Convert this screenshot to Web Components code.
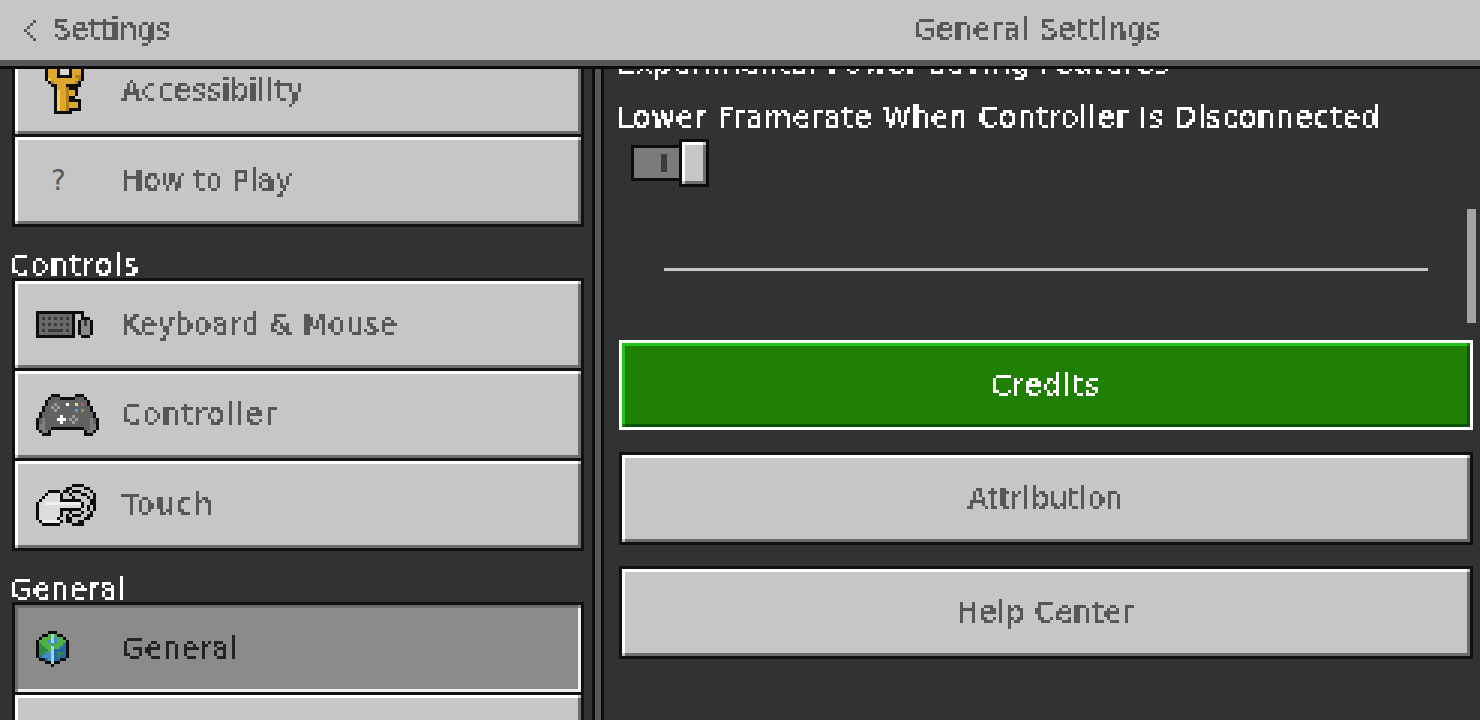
<!DOCTYPE html>
<html>
<head>
<meta charset="utf-8">
<title>General Settings</title>
<style>
  html, body { margin: 0; height: 100%; background: #313233; overflow: hidden; }
</style>
</head>
<body>
<settings-app></settings-app>

<script>
  // mosaic filter: samples text on a 3px grid so it reads like the bitmap font
  const PIXEL_FILTER = `
    <svg width="0" height="0" style="position:absolute">
      <filter id="px" x="-6" y="-6" width="1200" height="60" filterUnits="userSpaceOnUse" color-interpolation-filters="sRGB">
        <feFlood x="1" y="2" width="1" height="1"/>
        <feComposite width="3" height="3"/>
        <feTile result="grid"/>
        <feComposite in="SourceGraphic" in2="grid" operator="in"/>
        <feMorphology operator="dilate" radius="1"/>
        <feComponentTransfer><feFuncA type="discrete" tableValues="0 0 1 1 1"/></feComponentTransfer>
      </filter>
    </svg>`

  class McText extends HTMLElement {
    constructor() {
      super()
      this.attachShadow({ mode: 'open' })
      this.shadowRoot.innerHTML = `
        <style>
          :host { display: inline-block; font: 28px/30px "DejaVu Sans", sans-serif; white-space: nowrap; }
          span { display: inline-block; filter: url(#px); padding: 0 1px; -webkit-text-stroke: 0.4px currentColor; }
          :host([plain]) span { filter: none; -webkit-text-stroke: 0; }
        </style>
        ${PIXEL_FILTER}
        <span><slot></slot></span>`
    }

    // the bitmap font has its own widths, so stretch to the width it took
    connectedCallback() {
      const target = Number(this.getAttribute('w'))
      if (!target) return
      const span = this.shadowRoot.querySelector('span')
      const text = this.textContent
      const width = span.getBoundingClientRect().width - 2
      span.style.letterSpacing = ((target - width) / Math.max(text.length - 1, 1)) + 'px'
    }
  }

  const PALETTES = {
    key: { k: '#0d0d0d', g: '#dca72c', d: '#b07f1c', l: '#f2cf5e', w: '#d8d8d0' },
    kbd: { k: '#0d0d0d', m: '#6a6a6a', x: '#3a3a3a', g: '#8a8a86' },
    pad: { k: '#0d0d0d', m: '#626262', l: '#7d7d7d', s: '#9c9c9c', w: '#ffffff', y: '#e6dc84', r: '#c8566a', b: '#4f9fd8', n: '#6fa55a' },
    touch: { k: '#0d0d0d', w: '#dcdcdc', h: '#f0f0f0' },
    globe: { k: '#0d0d0d', G: '#4fb043', g: '#2f8a45', B: '#2468ac', b: '#3f8fd0', L: '#a7d3ea' },
  }

  const ICONS = {
    key: ['kgggggggggggk', 'kgggkkkkkgggk', 'kgggkwwwkgggk', 'kgggkwwwkgggk', 'kgggkkkkkgddk', 'klgggggggggdk',
      '.kdgggggggdk.', '..kkgggkkkkk.', '...kgggdkkk..', '...klggdggk..', '...klggdggk..', '...klggdkk...',
      '...klggdkkkk.', '...klggdgggk.', '...klggdgggk.', '...klggdkkkk.', '...kkkkkk....'],
    kbd: ['kkkkkkkkkkkkkkkk...', 'kmmmmmmmmmmmk..k...', 'kmxmxmxmxmxmk..kkk.', 'kmmmmmmmmmmmk.kgxgk',
      'kmxmxmxmxmxmk.kgxgk', 'kmmmmmmmmmmmk.kgggk', 'kmxmxxxxxmxmk.kgggk', 'kmmmmmmmmmmmk.kgggk', 'kkkkkkkkkkkkk..kkk.'],
    pad: ['.....kkk.....kkk.....', '....kmmmkkkkkmmmk....', '...kmmmmmmmmmmmmmk...', '...kmmsmmmwmmymrmk...',
      '..kmmsmsmmmmmmmmmmk..', '..kmmmsmmmmmmbmnmmk..', '.kmmmmmmmmmmmmmmmmmk.', '.kmmmmmmwmmmsmmmmmmk.',
      'kmlmmmmwwwmsmsmmmmlmk', 'kmlmmmmmwmmmsmmmmmlmk', 'kllmmmmmmmmmmmmmmmllk', 'kllmmkkkkkkkkkkkmmllk',
      '.kllk...........kllk.', '..kkk...........kkk..'],
    touch: ['............kkkk....', '..........kk....kk..', '....kkkk.kk.kkk...k.', '...kwwwwk..k...kk..k',
      '..kwwwwwk...k....k.k', '.kwwwwwwkkkkkkk...kk', 'kwwhhhhhhhhhhhhk..kk', 'kwwwwwwwwwwwwwwk.k.k',
      'kwwwwwwwkkkkkkk..k.k', 'kwwwwwwwk..k...k..k.', 'kwwwwwwwk.k.kkk..kk.', 'kwwwwwwk..kk....kk..',
      '.khhhhhhk.kk..kk....', '..kkkkkk....kkkk....'],
    globe: ['....kkk....', '..kkGLGkk..', '.kGGGLbGGk.', 'kGGGbLbGGGk', 'kgGGGbGGGBk', 'kggGGLGGBBk',
      'kgggGLBBBBk', 'kggbbLBggBk', 'kBbbbLBgBBk', '.kkBbLBBkk.', '...kkLkk...', '.....k.....'],
  }

  class McIcon extends HTMLElement {
    constructor() {
      super()
      this.attachShadow({ mode: 'open' })
    }

    connectedCallback() {
      const name = this.getAttribute('name')
      const rows = ICONS[name]
      const colors = PALETTES[name]
      let rects = ''
      rows.forEach((row, y) => {
        [...row].forEach((c, x) => {
          if (c !== '.') rects += `<rect x="${x * 3}" y="${y * 3}" width="3" height="3" fill="${colors[c]}"/>`
        })
      })
      const w = rows[0].length * 3
      const h = rows.length * 3
      this.shadowRoot.innerHTML = `
        <style>:host { display: block; line-height: 0; } svg { display: block; }</style>
        <svg width="${w}" height="${h}" viewBox="0 0 ${w} ${h}" shape-rendering="crispEdges">${rects}</svg>`
    }
  }

  // bevel painted with background layers so corners stay square like the game's
  const bevel = (top, left, bottom, right, fill, corner) => `
    background:
      linear-gradient(${corner},${corner}) left bottom / 3px 3px no-repeat,
      linear-gradient(${corner},${corner}) right top / 3px 3px no-repeat,
      linear-gradient(${top},${top}) left top / 100% 3px no-repeat,
      linear-gradient(${left},${left}) left top / 3px 100% no-repeat,
      linear-gradient(${bottom},${bottom}) left bottom / 100% 3px no-repeat,
      linear-gradient(${right},${right}) right top / 3px 100% no-repeat,
      ${fill};`

  class McButton extends HTMLElement {
    constructor() {
      super()
      this.attachShadow({ mode: 'open' })
      this.shadowRoot.innerHTML = `
        <style>
          :host {
            display: block;
            box-sizing: border-box;
            height: 93px;
            border: 3px solid #111112;
            color: #58585a;
            ${bevel('#ffffff', '#ffffff', '#6d6d6d', '#6d6d6d', '#c6c6c6', '#c6c6c6')}
            background-origin: padding-box;
            background-clip: padding-box;
          }
          :host([selected]) {
            color: #242425;
            ${bevel('#6d6d6d', '#6d6d6d', '#f0f0f0', '#f0f0f0', '#8b8b8b', '#8b8b8b')}
            background-origin: padding-box;
            background-clip: padding-box;
          }
          :host([primary]) {
            height: 90px;
            border-color: #ffffff;
            color: #ffffff;
            ${bevel('#21c21c', '#21c21c', '#0c530c', '#0c530c', '#1f8003', '#1f8003')}
            background-origin: padding-box;
            background-clip: padding-box;
          }
          .row { display: flex; align-items: center; height: 100%; }
          :host([center]) .row { justify-content: center; padding-top: 1px; box-sizing: border-box; }
          .icon { flex: none; width: 85px; margin-left: 21px; }
          :host([center]) .icon { display: none; }
        </style>
        <div class="row">
          <div class="icon"><slot name="icon"></slot></div>
          <slot></slot>
        </div>`
    }
  }

  class McToggle extends HTMLElement {
    constructor() {
      super()
      this.attachShadow({ mode: 'open' })
      this.shadowRoot.innerHTML = `
        <style>
          :host { display: flex; align-items: center; width: 78px; height: 48px; }
          .track {
            box-sizing: border-box;
            width: 51px;
            height: 36px;
            border: 3px solid #0d0d0d;
            border-right: 0;
            background: #7b7b7b;
            display: flex;
            align-items: center;
            padding-left: 27px;
          }
          .pip { width: 6px; height: 18px; background: #3b3b3b; }
          .knob {
            box-sizing: border-box;
            width: 30px;
            height: 48px;
            border: 3px solid #0d0d0d;
            ${bevel('#ffffff', '#ffffff', '#6d6d6d', '#6d6d6d', '#c6c6c6', '#c6c6c6')}
            background-origin: padding-box;
            background-clip: padding-box;
            margin-left: -3px;
          }
        </style>
        <div class="track"><div class="pip"></div></div>
        <div class="knob"></div>`
    }
  }

  class SettingsHeader extends HTMLElement {
    constructor() {
      super()
      this.attachShadow({ mode: 'open' })
      this.shadowRoot.innerHTML = `
        <style>
          :host {
            display: flex;
            flex: none;
            height: 60px;
            background: #c6c6c6;
            color: #58585a;
            border-bottom: 6px solid #58585a;
            box-shadow: 0 3px 0 #0b0b0b;
            position: relative;
            z-index: 1;
            margin-bottom: 3px;
          }
          .back { width: 595px; display: flex; align-items: center; gap: 13px; padding-left: 24px; box-sizing: border-box; }
          .back svg { display: block; }
          .title { flex: 1; display: flex; align-items: center; justify-content: center; }
        </style>
        <div class="back">
          <svg width="15" height="21" viewBox="0 0 15 21" shape-rendering="crispEdges" fill="#58585a">
            <path d="M9 0h3v3H9zM6 3h3v3H6zM3 6h3v3H3zM0 9h3v3H0zM3 12h3v3H3zM6 15h3v3H6zM9 18h3v3H9z"/>
          </svg>
          <mc-text w="117">Settings</mc-text>
        </div>
        <div class="title"><mc-text w="247">General Settings</mc-text></div>`
    }
  }

  class SettingsSidebar extends HTMLElement {
    constructor() {
      super()
      this.attachShadow({ mode: 'open' })
      this.shadowRoot.innerHTML = `
        <style>
          :host {
            display: block;
            flex: none;
            box-sizing: border-box;
            width: 604px;
            overflow: hidden;
            border-right: 3px solid #0d0d0d;
            position: relative;
          }
          .shade { position: absolute; top: 0; bottom: 0; right: 0; width: 6px; background: #58585a; border-left: 3px solid #0d0d0d; }
          .list { margin: -25px 0 0; padding: 0 17px 0 12px; width: 572px; }
          mc-button + mc-button { margin-top: -3px; }
          h2 { margin: 0 0 0 -3px; height: 51px; display: flex; align-items: flex-end; color: #fff; font: inherit; box-sizing: border-box; }
          h2 mc-text { margin-bottom: -3px; }
          .key { margin-left: 9px; margin-top: -4px; }
          .q { color: #58585a; margin-left: 14px; }
        </style>
        <div class="shade"></div>
        <div class="list">
          <mc-button><mc-icon class="key" slot="icon" name="key"></mc-icon><mc-text w="181">Accessibility</mc-text></mc-button>
          <mc-button><mc-text class="q" plain slot="icon">?</mc-text><mc-text w="170">How to Play</mc-text></mc-button>
          <h2><mc-text w="128">Controls</mc-text></h2>
          <mc-button><mc-icon slot="icon" name="kbd"></mc-icon><mc-text w="275">Keyboard &amp; Mouse</mc-text></mc-button>
          <mc-button><mc-icon slot="icon" name="pad"></mc-icon><mc-text w="154">Controller</mc-text></mc-button>
          <mc-button><mc-icon slot="icon" name="touch"></mc-icon><mc-text w="90">Touch</mc-text></mc-button>
          <h2><mc-text w="116">General</mc-text></h2>
          <mc-button selected><mc-icon slot="icon" name="globe"></mc-icon><mc-text w="116">General</mc-text></mc-button>
          <mc-button></mc-button>
        </div>`
    }
  }

  class SettingsPanel extends HTMLElement {
    constructor() {
      super()
      this.attachShadow({ mode: 'open' })
      this.shadowRoot.innerHTML = `
        <style>
          :host { display: block; flex: 1; overflow: hidden; position: relative; color: #fff; }
          .content { margin-top: -20px; padding: 0 7px 0 15px; display: flex; flex-direction: column; }
          .line { margin-left: -3px; height: 54px; display: flex; align-items: flex-end; }
          mc-toggle { margin: 6px 0 0 12px; }
          hr { border: 0; height: 3px; background: #c6c6c6; margin: 81px 45px 0 45px; }
          .actions { margin-top: 69px; display: flex; flex-direction: column; gap: 21px; }
          mc-button[primary] { margin-bottom: 1px; }
          .scroll { position: absolute; right: 4px; top: 140px; width: 9px; height: 114px; background: #a4a4a4; }
        </style>
        <div class="scroll"></div>
        <div class="content">
          <div class="line" style="height:30px"><mc-text w="552">Experimental Power-Saving Features</mc-text></div>
          <div class="line"><mc-text w="762">Lower Framerate When Controller Is Disconnected</mc-text></div>
          <mc-toggle></mc-toggle>
          <hr>
          <div class="actions">
            <mc-button primary center><mc-text w="108">Credits</mc-text></mc-button>
            <mc-button center><mc-text w="155">Attribution</mc-text></mc-button>
            <mc-button center><mc-text w="176">Help Center</mc-text></mc-button>
          </div>
        </div>`
    }
  }

  class SettingsApp extends HTMLElement {
    constructor() {
      super()
      this.attachShadow({ mode: 'open' })
      this.shadowRoot.innerHTML = `
        <style>
          :host { display: flex; flex-direction: column; height: 720px; background: #313233; overflow: hidden; }
          .body { flex: 1; display: flex; min-height: 0; }
        </style>
        <settings-header></settings-header>
        <div class="body">
          <settings-sidebar></settings-sidebar>
          <settings-panel></settings-panel>
        </div>`
    }
  }

  customElements.define('mc-text', McText)
  customElements.define('mc-icon', McIcon)
  customElements.define('mc-button', McButton)
  customElements.define('mc-toggle', McToggle)
  customElements.define('settings-header', SettingsHeader)
  customElements.define('settings-sidebar', SettingsSidebar)
  customElements.define('settings-panel', SettingsPanel)
  customElements.define('settings-app', SettingsApp)
</script>
</body>
</html>
